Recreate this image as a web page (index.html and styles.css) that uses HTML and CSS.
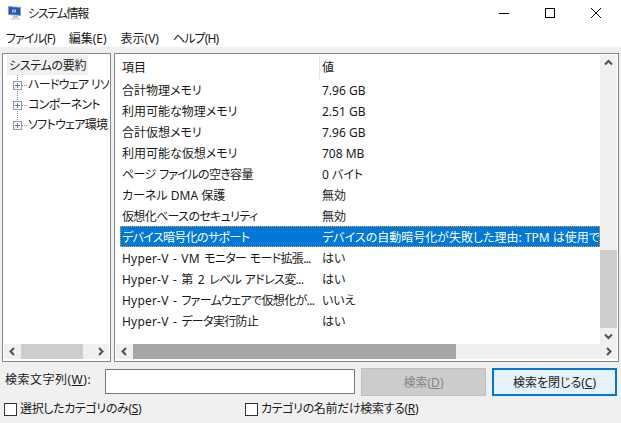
FILE: index.html
```html
<!DOCTYPE html>
<html lang="ja">
<head>
<meta charset="utf-8">
<title>システム情報</title>
<link rel="stylesheet" href="styles.css">
</head>
<body>
<div class="window">
  <header class="titlebar">
    <svg class="app-icon" width="16" height="16" viewBox="0 0 16 16">
      <path d="M1 1l13 1v9L1 10z" fill="#8d9cb4"/>
      <path d="M2 2l11 1v7L2 9z" fill="#1f54b8"/>
      <path d="M5 4.500h4v3H5z" fill="#a9c8ee"/>
      <path d="M6 5.500h2v1H6z" fill="#2f66b8"/>
      <path d="M6 11h5v2H6z" fill="#c2c6cc"/>
      <path d="M4 13h9v2H4z" fill="#dfe1e4"/>
    </svg>
    <span class="title">システム情報</span>
    <div class="controls">
      <svg class="ctl" width="46" height="30" viewBox="0 0 46 30"><path d="M18 13.5h10" stroke="#000" fill="none"/></svg>
      <svg class="ctl" width="46" height="30" viewBox="0 0 46 30"><rect x="18.500" y="8.500" width="9" height="9" stroke="#000" fill="none"/></svg>
      <svg class="ctl" width="46" height="30" viewBox="0 0 46 30"><path d="M18 8l10 10M28 8L18 18" stroke="#000" fill="none"/></svg>
    </div>
  </header>
  <nav class="menubar">
    <span class="kana">ファイル(F)</span><span>編集(E)</span><span>表示(V)</span><span class="kana">ヘルプ(H)</span>
  </nav>
  <main class="content">
    <div class="panes">
      <section class="pane tree-pane">
        <div class="tree">
          <div class="tree-root"><span class="root-label">システムの要約</span></div>
          <div class="branches">
            <div class="tree-item"><i class="plus"></i><i class="dash"></i><span>ハードウェア リソース</span></div>
            <div class="tree-item"><i class="plus"></i><i class="dash"></i><span>コンポーネント</span></div>
            <div class="tree-item"><i class="plus"></i><i class="dash"></i><span>ソフトウェア環境</span></div>
          </div>
        </div>
        <div class="hscroll">
          <svg class="arrow" width="17" height="15" viewBox="0 0 17 15"><path d="M10 4L6.500 7.500 10 11" stroke="#505050" stroke-width="2" fill="none"/></svg>
          <div class="track"><div class="thumb thumb-left"></div></div>
          <svg class="arrow" width="17" height="15" viewBox="0 0 17 15"><path d="M7 4l3.500 3.500L7 11" stroke="#505050" stroke-width="2" fill="none"/></svg>
        </div>
      </section>
      <section class="pane list-pane">
        <div class="list-body">
          <div class="list">
            <div class="head"><span class="c1">項目</span><span class="c2">値</span></div>
            <div class="row"><span class="c1">合計物理メモリ</span><span class="c2">7.96 GB</span></div>
            <div class="row"><span class="c1">利用可能な物理メモリ</span><span class="c2">2.51 GB</span></div>
            <div class="row"><span class="c1">合計仮想メモリ</span><span class="c2">7.96 GB</span></div>
            <div class="row"><span class="c1">利用可能な仮想メモリ</span><span class="c2">708 MB</span></div>
            <div class="row"><span class="c1 tight">ページ ファイルの空き容量</span><span class="c2">0 バイト</span></div>
            <div class="row"><span class="c1">カーネル DMA 保護</span><span class="c2">無効</span></div>
            <div class="row"><span class="c1 tight">仮想化ベースのセキュリティ</span><span class="c2">無効</span></div>
            <div class="row selected"><span class="c1 tight">デバイス暗号化のサポート</span><span class="c2">デバイスの自動暗号化が失敗した理由: TPM は使用できません</span></div>
            <div class="row"><span class="c1"><span class="lat">Hyper-V - VM </span><span class="tight">モニター モード拡張...</span></span><span class="c2">はい</span></div>
            <div class="row"><span class="c1"><span class="lat">Hyper-V - 第 2 </span><span class="tight">レベル アドレス変...</span></span><span class="c2">はい</span></div>
            <div class="row"><span class="c1"><span class="lat">Hyper-V - </span><span class="tight">ファームウェアで仮想化が...</span></span><span class="c2">いいえ</span></div>
            <div class="row"><span class="c1"><span class="lat">Hyper-V - </span><span class="tight">データ実行防止</span></span><span class="c2">はい</span></div>
          </div>
          <div class="vscroll">
            <svg class="arrow" width="17" height="15" viewBox="0 0 17 15"><path d="M5 9.500L8.500 6 12 9.500" stroke="#505050" stroke-width="2" fill="none"/></svg>
            <div class="vtrack"><div class="vthumb"></div></div>
            <svg class="arrow" width="17" height="15" viewBox="0 0 17 15"><path d="M5 5.500L8.500 9 12 5.500" stroke="#505050" stroke-width="2" fill="none"/></svg>
          </div>
        </div>
        <div class="hscroll">
          <svg class="arrow" width="17" height="15" viewBox="0 0 17 15"><path d="M10 4L6.500 7.500 10 11" stroke="#505050" stroke-width="2" fill="none"/></svg>
          <div class="track"><div class="thumb thumb-right"></div></div>
          <svg class="arrow" width="17" height="15" viewBox="0 0 17 15"><path d="M7 4l3.500 3.500L7 11" stroke="#505050" stroke-width="2" fill="none"/></svg>
        </div>
      </section>
    </div>
    <div class="search">
      <label class="search-label">検索文字列(<u>W</u>):</label>
      <div class="input"></div>
      <button class="btn disabled">検索(<u>D</u>)</button>
      <button class="btn primary">検索を閉じる(<u>C</u>)</button>
    </div>
    <div class="checks">
      <label class="check check-a"><i class="box"></i>選択したカテゴリのみ(<u>S</u>)</label>
      <label class="check"><i class="box"></i>カテゴリの名前だけ検索する(<u>R</u>)</label>
    </div>
  </main>
</div>
</body>
</html>
```
FILE: styles.css
```css
* { box-sizing: border-box; }
html, body { margin: 0; padding: 0; }
body {
  width: 621px; height: 423px; overflow: hidden; background: #fff;
  font-family: "Noto Sans", "Noto Sans CJK JP", sans-serif;
  font-feature-settings: "palt";
  font-size: 12px; color: #1a1a1a; line-height: 16px;
}
.window { display: flex; flex-direction: column; height: 423px; }
.titlebar { display: flex; align-items: center; height: 30px; flex: none; padding-left: 7px; }
.app-icon { flex: none; margin-top: -4px; }
.title { margin-left: 5px; margin-top: -2px; letter-spacing: -1.300px; }
.controls { display: flex; margin-left: auto; margin-right: 2px; }
.ctl { display: block; }
.menubar { display: flex; gap: 14px; height: 17px; flex: none; padding-left: 6px; align-items: center; }
.kana { letter-spacing: -0.900px; }
.content { flex: 1; background: #f0f0f0; display: flex; flex-direction: column; padding: 6px 2px 0; }
.panes { display: flex; gap: 3px; height: 309px; flex: none; }
.pane { background: #fff; border: 1px solid #828790; display: flex; flex-direction: column; }
.tree-pane { width: 109px; flex: none; padding: 1px; }
.list-pane { flex: 1; min-width: 0; padding: 1px; }
.tree { flex: 1; padding: 0 0 0 3px; overflow: hidden; }
.tree-root { height: 20px; line-height: 21px; }
.root-label { background: #f0f0f0; padding: 0 2px; display: inline-block; height: 20px; white-space: nowrap; letter-spacing: -0.300px; }
.branches {
  background: repeating-linear-gradient(#8f8f8f 0 1px, transparent 1px 2px) 10px 0 / 1px 46px no-repeat;
}
.tree-item { display: flex; align-items: center; height: 20px; white-space: nowrap; padding-left: 6px; line-height: 22px; letter-spacing: -0.700px; }
.plus {
  width: 9px; height: 9px; flex: none; border: 1px solid #8e9bb0;
  background: linear-gradient(#6c7f9f, #6c7f9f) center/5px 1px no-repeat, linear-gradient(#6c7f9f, #6c7f9f) center/1px 5px no-repeat, #f4f6fa;
}
.dash {
  width: 6px; height: 1px; flex: none;
  background: repeating-linear-gradient(90deg, #8f8f8f 0 1px, transparent 1px 2px);
}
.hscroll { display: flex; height: 15px; flex: none; background: #f0f0f0; margin-bottom: 1px; }
.arrow { display: block; flex: none; }
.track { flex: 1; min-width: 0; }
.thumb { height: 15px; }
.thumb-left { width: 62px; background: #cdcdcd; }
.thumb-right { width: 323px; background: #a6a6a6; }
.list-body { flex: 1; display: flex; min-height: 0; }
.list { flex: 1; min-width: 0; overflow: hidden; padding: 1px 0 0 4px; }
.head { display: flex; height: 23px; line-height: 24px; }
.row { display: flex; height: 21px; line-height: 23px; white-space: nowrap; overflow: hidden; }
.c1 { width: 200px; flex: none; padding-left: 2px; overflow: hidden; }
.c2 { flex: 1; padding-left: 2px; min-width: 0; overflow: hidden; white-space: nowrap; }
.tight { letter-spacing: -0.650px; word-spacing: 1px; }
.lat { letter-spacing: 0.200px; word-spacing: 1px; }
.head .c1 { border-right: 1px solid #e5e5e5; }
.selected { background: #0078d7; color: #fff; outline: 1px dotted #f5a040; outline-offset: -1px; }
.vscroll { width: 17px; flex: none; background: #f0f0f0; display: flex; flex-direction: column; }
.vtrack { flex: 1; padding-top: 180px; }
.vthumb { height: 78px; background: #cdcdcd; }
.search { display: flex; align-items: center; height: 28px; margin-top: 6px; padding-left: 3px; }
.search-label { width: 100px; flex: none; margin-top: -5px; letter-spacing: 0.500px; white-space: nowrap; }
.input { width: 250px; height: 25px; flex: none; background: #fff; border: 1px solid #7a7a7a; margin-top: -2px; }
.btn {
  width: 125px; height: 28px; flex: none; font: inherit; color: inherit; padding: 1px 0 0;
  border: 1px solid #adadad; background: #e1e1e1;
}
.btn.disabled { margin-left: 6px; background: #cccccc; border-color: #bfbfbf; color: #838383; }
.btn.primary { margin-left: 6px; background: #e5f1fb; border: 2px solid #0078d7; }
.checks { display: flex; align-items: center; margin-top: 4px; padding-left: 2px; height: 18px; }
.check { display: flex; align-items: center; white-space: nowrap; letter-spacing: -0.350px; }
.check-a { width: 241px; flex: none; }
.box { width: 13px; height: 13px; flex: none; margin-right: 3px; background: #fff; border: 1px solid #333; }
```
